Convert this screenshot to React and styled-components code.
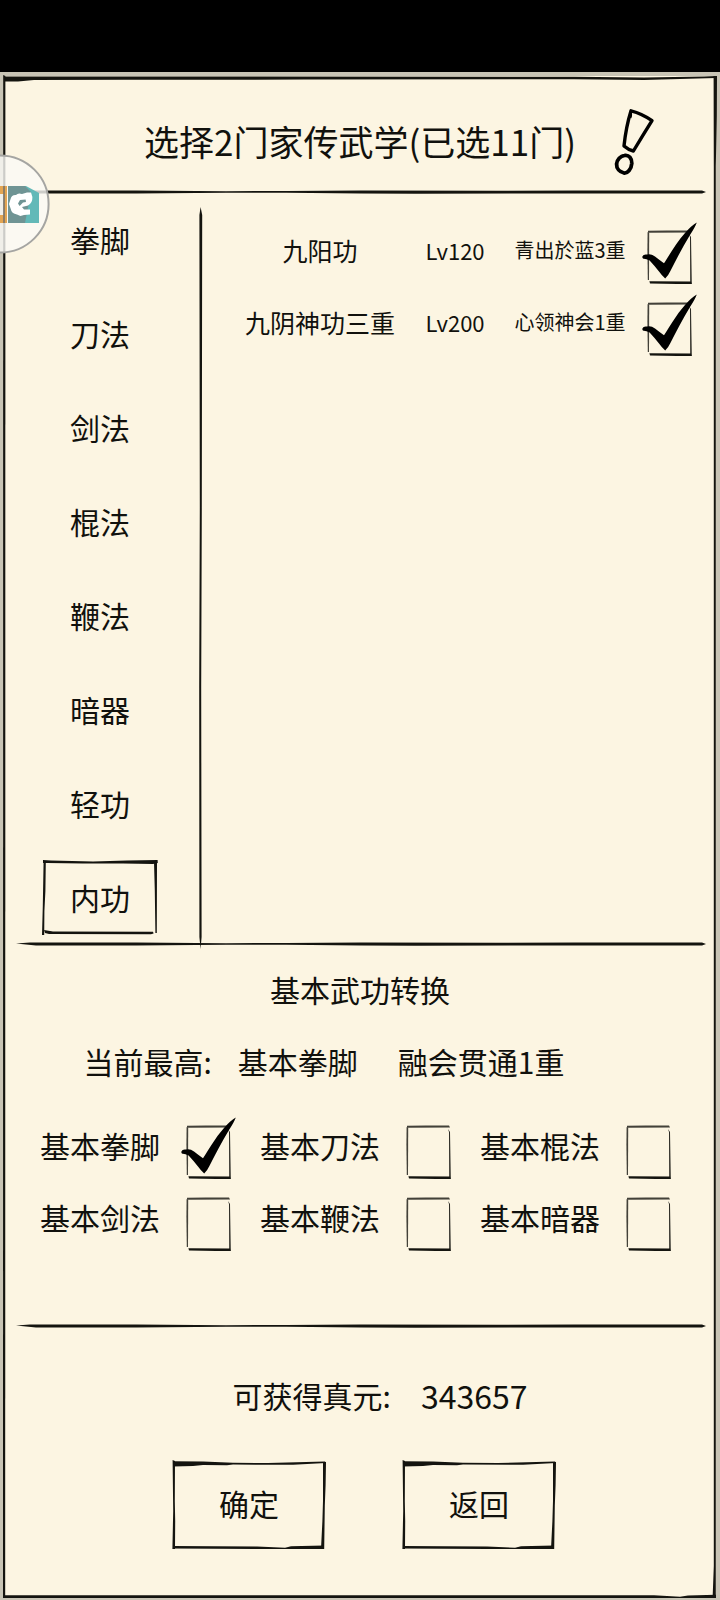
import React, { useState } from "react";
import styled, { createGlobalStyle } from "styled-components";

const GlobalStyle = createGlobalStyle`
  * {
    box-sizing: border-box;
  }
  body {
    margin: 0;
    background: #c8c4b5;
    font-family: "Noto Sans CJK SC", "Noto Sans", sans-serif;
    color: #11110d;
  }
`;

const Screen = styled.div`
  position: relative;
  display: flex;
  flex-direction: column;
  min-height: 100vh;
`;

const StatusBar = styled.div`
  height: 72px;
  background: #000000;
`;

const Paper = styled.main`
  position: relative;
  flex: 1;
  display: flex;
  flex-direction: column;
  margin: 4px 4px 2px;
  background: #fcf5e2;
`;

const Sketch = styled.svg`
  position: absolute;
  inset: 0;
  width: 100%;
  height: 100%;
  overflow: visible;
  pointer-events: none;
  fill: #14140f;
`;

const Header = styled.header`
  display: grid;
  grid-template-columns: 1fr auto 1fr;
  column-gap: 38px;
  align-items: center;
  height: 113px;
  padding-top: 18px;

  h1 {
    grid-column: 2;
    margin: 0;
    padding-bottom: 2px;
    font-weight: 400;
    font-size: 35px;
    line-height: 44px;
    white-space: nowrap;
  }
`;

const HelpButton = styled.button`
  justify-self: start;
  display: flex;
  padding: 0;
  border: 0;
  background: none;
  cursor: pointer;
`;

const DividerLine = styled.svg`
  display: block;
  width: calc(100% - 22px);
  height: 6px;
  margin: 0 10px 0 12px;
  fill: #14140f;
`;

const Middle = styled.section`
  display: grid;
  grid-template-columns: 194px 6px 1fr;
`;

const VerticalLine = styled.svg`
  width: 6px;
  height: 100%;
  fill: #14140f;
`;

const LineCell = styled.div`
  display: flex;
  margin: 12px 0 -8px;
  min-height: 0;
`;

const Tabs = styled.nav`
  display: flex;
  flex-direction: column;
  align-items: center;
  gap: 20px;
  padding: 8px 2px 6px 0;
`;

const Tab = styled.button`
  position: relative;
  width: 114px;
  height: 74px;
  padding: 0 0 2px;
  border: 0;
  background: none;
  font: inherit;
  font-size: 30px;
  line-height: 44px;
  color: inherit;
  cursor: pointer;
`;

const SkillList = styled.ul`
  list-style: none;
  margin: 0;
  padding: 26px 8px 0 36px;
`;

const SkillRow = styled.li`
  display: grid;
  grid-template-columns: 1fr 110px 120px 78px;
  align-items: center;
  justify-items: center;
  height: 72px;
  white-space: nowrap;
`;

const SkillText = styled.label`
  padding-bottom: 14px;
  font-size: ${(props) => props.$size || 25}px;
  line-height: 32px;
`;

const CheckWrap = styled.span`
  position: relative;
  display: block;
  width: 45px;
  height: 54px;

  input {
    appearance: none;
    display: block;
    width: 100%;
    height: 100%;
    margin: 0;
    cursor: pointer;
  }
`;

const Convert = styled.section`
  padding: 20px 0 63px;

  h2 {
    margin: 0;
    font-weight: 400;
    font-size: 30px;
    line-height: 44px;
    text-align: center;
  }
`;

const Highest = styled.p`
  display: flex;
  justify-content: center;
  gap: 26px;
  margin: 28px 0 0;
  padding-right: 72px;
  font-size: 30px;
  line-height: 44px;

  span:last-child {
    margin-left: 14px;
  }
`;

const BasicGrid = styled.div`
  display: grid;
  grid-template-columns: repeat(3, 1fr);
  grid-auto-rows: 72px;
  padding: 33px 16px 0 36px;
`;

const BasicItem = styled.div`
  display: flex;
  align-items: center;
  gap: 26px;

  label {
    padding-bottom: 14px;
    font-size: 30px;
    line-height: 44px;
  }
`;

const Footer = styled.footer`
  flex: 1;
  padding: 44px 0 48px;
`;

const Gain = styled.p`
  display: flex;
  justify-content: center;
  gap: 30px;
  margin: 0;
  padding-left: 40px;
  font-size: 30px;
  line-height: 44px;

  strong {
    font-weight: 400;
    font-size: 32px;
  }
`;

const Actions = styled.div`
  display: flex;
  justify-content: center;
  gap: 78px;
  margin-top: 44px;
  padding-left: 8px;
`;

const ActionButton = styled.button`
  position: relative;
  width: 152px;
  height: 88px;
  padding: 0 0 4px;
  border: 0;
  background: none;
  font: inherit;
  font-size: 30px;
  line-height: 44px;
  color: inherit;
  cursor: pointer;
`;

const Bubble = styled.button`
  position: absolute;
  left: 0;
  top: 154px;
  padding: 0;
  border: 0;
  background: none;
  cursor: pointer;

  svg {
    display: block;
  }
`;

const categories = ["拳脚", "刀法", "剑法", "棍法", "鞭法", "暗器", "轻功", "内功"];

const skills = [
  { id: "jiuyang", name: "九阳功", level: "Lv120", stage: "青出於蓝3重" },
  { id: "jiuyin", name: "九阴神功三重", level: "Lv200", stage: "心领神会1重" },
];

const basics = [
  { id: "fist", name: "基本拳脚" },
  { id: "blade", name: "基本刀法" },
  { id: "staff", name: "基本棍法" },
  { id: "sword", name: "基本剑法" },
  { id: "whip", name: "基本鞭法" },
  { id: "hidden", name: "基本暗器" },
];

const Divider = () => (
  <DividerLine viewBox="0 0 690 6" preserveAspectRatio="none" aria-hidden="true">
    <path d="M0 2.4 L14 1.6 L120 1.6 L210 2.2 L270 2 L345 1.4 L480 1.8 L560 1.4 L686 1.4 L690 3 L686 4.6 L560 4.4 L400 4.8 L345 4.4 L270 3.8 L210 3.8 L120 4.4 L20 4.4 Z" />
  </DividerLine>
);

// hand drawn outline round the whole sheet
const PaperFrame = () => (
  <Sketch viewBox="0 0 712 1522" preserveAspectRatio="none" aria-hidden="true">
    <path d="M0 0.6 L120 0.4 L570 0.8 L640 1.4 L700 0.4 L712 0 L712 2 L640 4 L570 3.2 L300 3.6 L120 3.8 L30 4 L14 5.4 L0 5.4 Z" />
    <path d="M-0.8 -1 L1.4 0 L1.2 1522 L-1 1522 Z" />
    <path d="M709.6 0 L713 0 L712.8 40 L711.8 90 L711.8 1480 L711.8 1522 L708.6 1522 L709.8 1490 L709.8 90 Z" />
    <path d="M0 1519.2 L650 1519.2 L676 1520.8 L684 1519.6 L712 1518.8 L712 1522 L0 1522 Z" />
  </Sketch>
);

const TabFrame = () => (
  <Sketch viewBox="0 0 114 74" preserveAspectRatio="none" aria-hidden="true">
    <path d="M0 -1 L8 -0.4 L50 0.4 L84 -0.6 L114.6 -1 L114.8 2 L110 3 L80 2.4 L40 2.4 L4 2 L0 2 Z" />
    <path d="M0.6 0 L2.8 1 L2.4 30 L1.4 50 L1.2 74 L-1 74 L-0.2 45 Z" />
    <path d="M111 1 L114 1 L113.8 72 L112.4 72 L111.8 30 Z" />
    <path d="M1 69 L10 70.6 L110 70.8 L110.6 72.6 L108 73.2 L6 73 L2 72 Z" />
  </Sketch>
);

const ButtonFrame = () => (
  <Sketch viewBox="0 0 152 88" preserveAspectRatio="none" aria-hidden="true">
    <path d="M0 0.2 L30 0.6 L60 1.8 L95 2 L152 0.4 L153 2 L120 3.8 L60 3.6 L54 4.2 L30 4 L20 5 L0 5.6 Z" />
    <path d="M-0.4 -1 L2 0 L1.8 40 L2.2 60 L2 88 L-0.6 88 L0.2 50 Z" />
    <path d="M150 1 L153 1 L152.6 24 L151.8 45 L151.2 88 L148 88 L149.4 60 L150 40 Z" />
    <path d="M0 85 L84 85.6 L112 86.8 L118 85.2 L151 84.4 L151 88 L84 88 L0 87.6 Z" />
  </Sketch>
);

const CheckMark = ({ checked }) => (
  <Sketch viewBox="0 0 45 54" preserveAspectRatio="none" aria-hidden="true">
    <path d="M1 0.8 L20 0.6 L43 0.6 L44 2.6 L1 2.8 Z" opacity="0.8" />
    <path d="M0.6 2 L2.2 3 L2 50 L0.8 50 L0.4 20 Z" opacity="0.8" />
    <path d="M42 4 L44 7 L44.8 54 L43.2 54 L43 7 Z" opacity="0.9" />
    <path d="M2.4 51.2 L44 51.6 L44.6 54 L30 54 L3 53.6 Z" />
    {checked && (
      <path
        fill="#000"
        d="M-4.6 26.4 Q-3.6 24 0 24.6 Q4 23.6 8 26.4 Q12.6 30 17 33.2 C21 27.4 29 13 38 3 Q44.6 -4.4 49.8 -7.4 Q48 -2.4 43 5 C35.6 17 29 30 23.4 41 Q21.4 45.4 18.2 48.6 Q14.6 45 12 41.4 Q7 35.4 2.6 30.6 Q-1 28.6 -3.6 28.8 Q-5 28 -4.6 26.4 Z"
      />
    )}
  </Sketch>
);

const Checkbox = ({ id, checked, onChange }) => (
  <CheckWrap>
    <input type="checkbox" id={id} checked={checked} onChange={onChange} />
    <CheckMark checked={checked} />
  </CheckWrap>
);

const App = () => {
  const [category, setCategory] = useState("内功");
  const [picked, setPicked] = useState({ jiuyang: true, jiuyin: true });
  const [basic, setBasic] = useState({ fist: true });

  const toggle = (setter, id) => {
    setter((pre) => {
      return { ...pre, [id]: !pre[id] };
    });
  };

  return (
    <Screen>
      <GlobalStyle />
      <StatusBar />
      <Paper>
        <Header>
          <h1>选择2门家传武学(已选11门)</h1>
          <HelpButton type="button" aria-label="说明">
            <svg width="42" height="68" viewBox="0 0 42 68" fill="none" stroke="#000" strokeWidth="3.4" strokeLinejoin="round">
              <path d="M17 2.8 Q28 5.6 38 12.6 Q29 27 19.4 43 Q14 41.6 10 38 Q12 19 17 2.8 Z" />
              <path strokeWidth="2" d="M16 4 Q18 6 16.4 10" />
              <path strokeWidth="3.8" d="M10.6 47.4 C15 46.6 18 50.6 17.8 55.4 C17.4 61 13.6 65.4 10 65 C5.6 64 2.4 60.4 2.6 56 C3 51.6 6.4 48 10.6 47.4 Z" />
            </svg>
          </HelpButton>
        </Header>
        <Divider />
        <Middle>
          <Tabs>
            {categories.map((name) => (
              <Tab
                key={name}
                type="button"
                aria-pressed={name === category}
                onClick={() => setCategory(name)}
              >
                {name === category && <TabFrame />}
                {name}
              </Tab>
            ))}
          </Tabs>
          <LineCell>
            <VerticalLine viewBox="0 0 6 740" preserveAspectRatio="none" aria-hidden="true">
              <path d="M2.6 0 L4.2 8 L3.8 300 L3.2 480 L3.6 728 L2.6 740 L1.4 728 L1.2 480 L1.8 300 L1.4 8 Z" />
            </VerticalLine>
          </LineCell>
          <SkillList>
            {skills.map((skill) => (
              <SkillRow key={skill.id}>
                <SkillText htmlFor={skill.id}>{skill.name}</SkillText>
                <SkillText as="span" $size={22}>
                  {skill.level}
                </SkillText>
                <SkillText as="span" $size={20}>
                  {skill.stage}
                </SkillText>
                <Checkbox
                  id={skill.id}
                  checked={!!picked[skill.id]}
                  onChange={() => toggle(setPicked, skill.id)}
                />
              </SkillRow>
            ))}
          </SkillList>
        </Middle>
        <Divider />
        <Convert>
          <h2>基本武功转换</h2>
          <Highest>
            <span>当前最高:</span>
            <span>基本拳脚</span>
            <span>融会贯通1重</span>
          </Highest>
          <BasicGrid>
            {basics.map((item) => (
              <BasicItem key={item.id}>
                <label htmlFor={item.id}>{item.name}</label>
                <Checkbox
                  id={item.id}
                  checked={!!basic[item.id]}
                  onChange={() => toggle(setBasic, item.id)}
                />
              </BasicItem>
            ))}
          </BasicGrid>
        </Convert>
        <Divider />
        <Footer>
          <Gain>
            <span>可获得真元:</span>
            <strong>343657</strong>
          </Gain>
          <Actions>
            <ActionButton type="button">
              <ButtonFrame />
              确定
            </ActionButton>
            <ActionButton type="button">
              <ButtonFrame />
              返回
            </ActionButton>
          </Actions>
        </Footer>
        <PaperFrame />
      </Paper>
      <Bubble type="button" aria-label="悬浮菜单">
        <svg width="50" height="100" viewBox="0 0 50 100">
          <circle cx="0" cy="50" r="48.6" fill="#fafaf6" fillOpacity="0.8" stroke="#a5a5a2" strokeWidth="2" />
          <path d="M0 32 H7 V69 H0 V61 H4 V40 H0 Z" fill="#e3a552" />
          <path d="M8 32 H26 L39 39 V69 H8 Z" fill="#62b9b8" />
          <path d="M8 32 H25 L31 38 L25 69 H8 Z" fill="#6f9494" />
          <path d="M3 32 H5 V69 H3 Z" fill="#77736a" fillOpacity="0.8" />
          <path
            fill="#fff"
            d="M31 38.6 L32.4 43 Q32.6 49 28 51.6 L22 53 L24 55.6 H30 V60.4 L24 61 L20.4 62 L17 60.4 Q11.6 60 10.6 54.6 L9 50 L10.6 45 Q11.6 40.6 16 41 Q18 38.6 22 40 L27 38.6 Z M20 46 L18 49.6 L19.6 52 L23 48.6 L26 48 L25.6 45.6 Z"
            fillRule="evenodd"
          />
        </svg>
      </Bubble>
    </Screen>
  );
};

export default App;
